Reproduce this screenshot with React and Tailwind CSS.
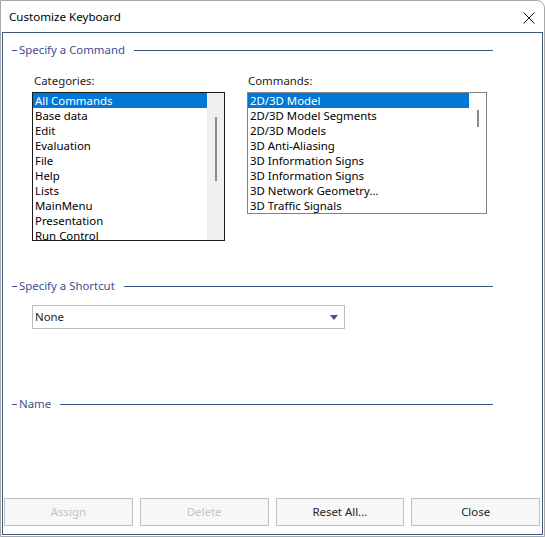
const categories = [
  'All Commands',
  'Base data',
  'Edit',
  'Evaluation',
  'File',
  'Help',
  'Lists',
  'MainMenu',
  'Presentation',
  'Run Control',
];

const commands = [
  '2D/3D Model',
  '2D/3D Model Segments',
  '2D/3D Models',
  '3D Anti-Aliasing',
  '3D Information Signs',
  '3D Information Signs',
  '3D Network Geometry...',
  '3D Traffic Signals',
];

// group caption with the dash in front and the rule after it
const GroupHeader = ({ title }) => (
  <div className="flex items-center h-4 pl-[9px] pr-[49px]">
    <span className="w-[5px] h-px bg-[#3d4f8f]" />
    <span className="ml-[2px] text-[#3d4f8f] leading-4">{title}</span>
    <span className="ml-[9px] flex-1 h-px bg-[#3b5480]" />
  </div>
);

const ListBox = ({ items, width, height, focused, thumb }) => (
  <div
    className={`flex border ${focused ? 'border-[#1a1a1a]' : 'border-[#828282]'} bg-white overflow-hidden ${width} ${height}`}
  >
    <div className="flex-1 overflow-hidden">
      {items.map((item, i) => (
        <div
          key={i}
          className={`h-[15px] leading-[15px] pl-[2px] whitespace-nowrap overflow-hidden ${i === 0 ? 'bg-[#0078d7] text-white' : 'text-black'}`}
        >
          {item}
        </div>
      ))}
    </div>
    <div className={`w-[17px] flex justify-center ${focused ? 'bg-[#f0f0f0]' : 'bg-white'}`}>
      <div className={`w-[2px] bg-[#8a8a8a] ${thumb}`} />
    </div>
  </div>
);

const Button = ({ label, disabled }) => (
  <button
    className={`h-[28px] border border-[#c0c0c0] bg-[#f7f7f7] ${disabled ? 'text-[#c3c3c3]' : 'text-[#222]'}`}
  >
    {label}
  </button>
);

export default function App() {
  return (
    <div
      className="w-[545px] h-[537px] bg-white border border-[#a8a8a8] rounded-tr-[8px] flex flex-col text-[11.4px] text-black overflow-hidden"
      style={{ fontFamily: '"Noto Sans", "Open Sans", sans-serif' }}
    >
      {/* title bar */}
      <div className="h-[31px] flex items-center justify-between pl-[8px] pr-[8px]">
        <span className="text-[11.6px] text-black">Customize Keyboard</span>
        <svg width="12" height="12" viewBox="0 0 12 12" className="mr-[1px] mt-[2px]">
          <path d="M0.5 0.5 L11.5 11.5 M11.5 0.5 L0.5 11.5" stroke="#111" strokeWidth="1" />
        </svg>
      </div>

      {/* dialog body */}
      <div className="flex-1 mx-[1px] mb-px border border-[#43597f] flex flex-col">
        <div className="mt-[9px]">
          <GroupHeader title="Specify a Command" />
        </div>

        <div className="flex mt-[15px] ml-[29px]">
          <div className="flex flex-col">
            <span className="h-4 leading-4 pl-[2px] text-[#222]">Categories:</span>
            <div className="mt-[3px]">
              <ListBox
                items={categories}
                width="w-[193px]"
                height="h-[149px]"
                focused
                thumb="mt-[24px] h-[64px]"
              />
            </div>
          </div>
          <div className="flex flex-col ml-[22px]">
            <span className="h-4 leading-4 pl-[1px] text-[#222]">Commands:</span>
            <div className="mt-[3px]">
              <ListBox
                items={commands}
                width="w-[240px]"
                height="h-[122px]"
                thumb="mt-[17px] h-[17px]"
              />
            </div>
          </div>
        </div>

        <div className="mt-[37px]">
          <GroupHeader title="Specify a Shortcut" />
        </div>

        <div className="mt-[11px] ml-[29px] w-[313px] h-[24px] border border-[#bcbcbc] flex items-center justify-between pl-[2px] pr-[6px]">
          <span className="text-[#222]">None</span>
          <svg width="8" height="5" viewBox="0 0 8 5">
            <path d="M0 0 H8 L4 5 Z" fill="#3b5480" />
          </svg>
        </div>

        <div className="mt-[67px]">
          <GroupHeader title="Name" />
        </div>

        <div className="flex-1" />

        <div className="grid grid-cols-4 gap-[7px] pl-[1px] pr-[2px] mb-[8px]">
          <Button label="Assign" disabled />
          <Button label="Delete" disabled />
          <Button label="Reset All..." />
          <Button label="Close" />
        </div>
      </div>
    </div>
  );
}
